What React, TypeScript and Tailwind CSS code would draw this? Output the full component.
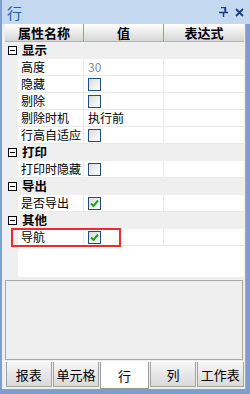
import React from 'react';

const font = { fontFamily: '"Noto Sans CJK SC", "Noto Sans", sans-serif' };

type Row =
  | { kind: 'cat'; label: string }
  | { kind: 'prop'; label: string; value?: string; check?: boolean; checked?: boolean; highlight?: boolean };

const rows: Row[] = [
  { kind: 'cat', label: '显示' },
  { kind: 'prop', label: '高度', value: '30' },
  { kind: 'prop', label: '隐藏', check: true },
  { kind: 'prop', label: '剔除', check: true },
  { kind: 'prop', label: '剔除时机', value: '执行前' },
  { kind: 'prop', label: '行高自适应', check: true },
  { kind: 'cat', label: '打印' },
  { kind: 'prop', label: '打印时隐藏', check: true },
  { kind: 'cat', label: '导出' },
  { kind: 'prop', label: '是否导出', check: true, checked: true },
  { kind: 'cat', label: '其他' },
  { kind: 'prop', label: '导航', check: true, checked: true, highlight: true },
];

function Checkbox({ checked }: { checked?: boolean }) {
  return (
    <div className="w-[13px] h-[13px] border border-[#1d5082] bg-gradient-to-br from-[#dcdcdc] to-white flex items-center justify-center">
      {checked && (
        <svg width="9" height="9" viewBox="0 0 9 9">
          <path d="M1 4.5 L3.5 7 L8 1.5" fill="none" stroke="#21a121" strokeWidth="2" />
        </svg>
      )}
    </div>
  );
}

function Collapse() {
  return (
    <div className="w-[9px] h-[9px] border border-black bg-white flex items-center justify-center">
      <div className="w-[5px] h-[1px] bg-black" />
    </div>
  );
}

export default function App() {
  const tabs = ['报表', '单元格', '行', '列', '工作表'];
  return (
    <div className="w-[250px] h-[394px] bg-[#7e9fcd] pl-[2px] pr-[4px] pb-[5px] flex flex-col" style={font}>
      {/* title bar */}
      <div className="h-[25px] bg-[#c4d9f0] flex items-center pl-[3px] pr-[4px] -mr-[4px] -ml-[2px] border-l-2 border-[#7e9fcd]">
        <span className="text-[15px] text-[#2b5ba5] leading-none ml-[2px]">行</span>
        <div className="ml-auto flex items-center gap-[7px] pr-[2px]">
          <svg width="9" height="10" viewBox="0 0 9 10">
            <path d="M2 0.5 H6.5 V5 M6 0.5 V5 M0 5.5 H9 M4.5 5.5 V10" fill="none" stroke="#1b3f7c" strokeWidth="1.4" />
          </svg>
          <svg width="9" height="9" viewBox="0 0 9 9">
            <path d="M1 1 L8 8 M8 1 L1 8" fill="none" stroke="#1b3f7c" strokeWidth="1.8" />
          </svg>
        </div>
      </div>

      <div className="flex-1 flex flex-col bg-[#efefef] pl-[3px] pr-[1px] border-r border-[#a9a9a9]">
        {/* header */}
        <div className="h-[18px] flex text-[13px] font-bold text-black leading-none">
          <div className="w-[79px] flex items-center justify-center bg-gradient-to-b from-white to-[#d6d6d6] border-r border-[#8f9fb3] border-b border-b-[#b5b5b5]">属性名称</div>
          <div className="w-[80px] flex items-center justify-center bg-gradient-to-b from-white to-[#d6d6d6] border-r border-[#8f9fb3] border-b border-b-[#b5b5b5]">值</div>
          <div className="flex-1 flex items-center justify-center bg-gradient-to-b from-white to-[#d6d6d6] border-b border-[#b5b5b5]">表达式</div>
        </div>

        {rows.map((r, i) =>
          r.kind === 'cat' ? (
            <div key={i} className="h-[17px] flex items-center bg-[#efefef]">
              <div className="w-[14px] flex justify-center pl-[1px]">
                <Collapse />
              </div>
              <span className="ml-[3px] text-[12.5px] font-bold leading-none text-black">{r.label}</span>
            </div>
          ) : (
            <div key={i} className="h-[17px] flex relative">
              <div className="w-[13px] bg-[#efefef]" />
              <div className="w-[66px] bg-white border-r border-b border-[#e8e8e8] flex items-center pl-[3px] text-[12px] leading-none text-black whitespace-nowrap">
                {r.label}
              </div>
              <div className="w-[80px] bg-white border-r border-b border-[#e8e8e8] flex items-center pl-[4px] text-[12px] leading-none">
                {r.check ? (
                  <Checkbox checked={r.checked} />
                ) : (
                  <span className={r.value === '30' ? 'text-[#7f8c95]' : 'text-black'}>{r.value}</span>
                )}
              </div>
              <div className="flex-1 bg-white border-b border-[#e8e8e8]" />
              {r.highlight && (
                <div className="absolute left-[6px] -top-[1px] w-[110px] h-[19px] border-2 border-[#ec2a2f]" />
              )}
            </div>
          )
        )}

        {/* blank area */}
        <div className="h-[31px] flex">
          <div className="w-[13px] bg-[#efefef]" />
          <div className="flex-1 bg-white" />
        </div>

        {/* description */}
        <div className="mt-[3px] h-[80px] mr-[1px] border border-[#a6a6a6] bg-[#efefef]" />

        {/* tabs */}
        <div className="mt-[1px] h-[1px] bg-white -ml-[3px]" />
        <div className="flex-1 flex text-[13px] leading-none text-black">
          {tabs.map((t) =>
            t === '行' ? (
              <div key={t} className="w-[50px] h-[27px] bg-white border-x border-b border-[#9a9a9a] flex items-center justify-center">
                {t}
              </div>
            ) : (
              <div key={t} className="w-[47px] h-[25px] mx-[0.5px] bg-gradient-to-b from-[#f6f6f6] to-[#d9d9d9] border-r border-b border-l border-[#a3a3a3] flex items-center justify-center">
                {t}
              </div>
            )
          )}
        </div>
      </div>
    </div>
  );
}
